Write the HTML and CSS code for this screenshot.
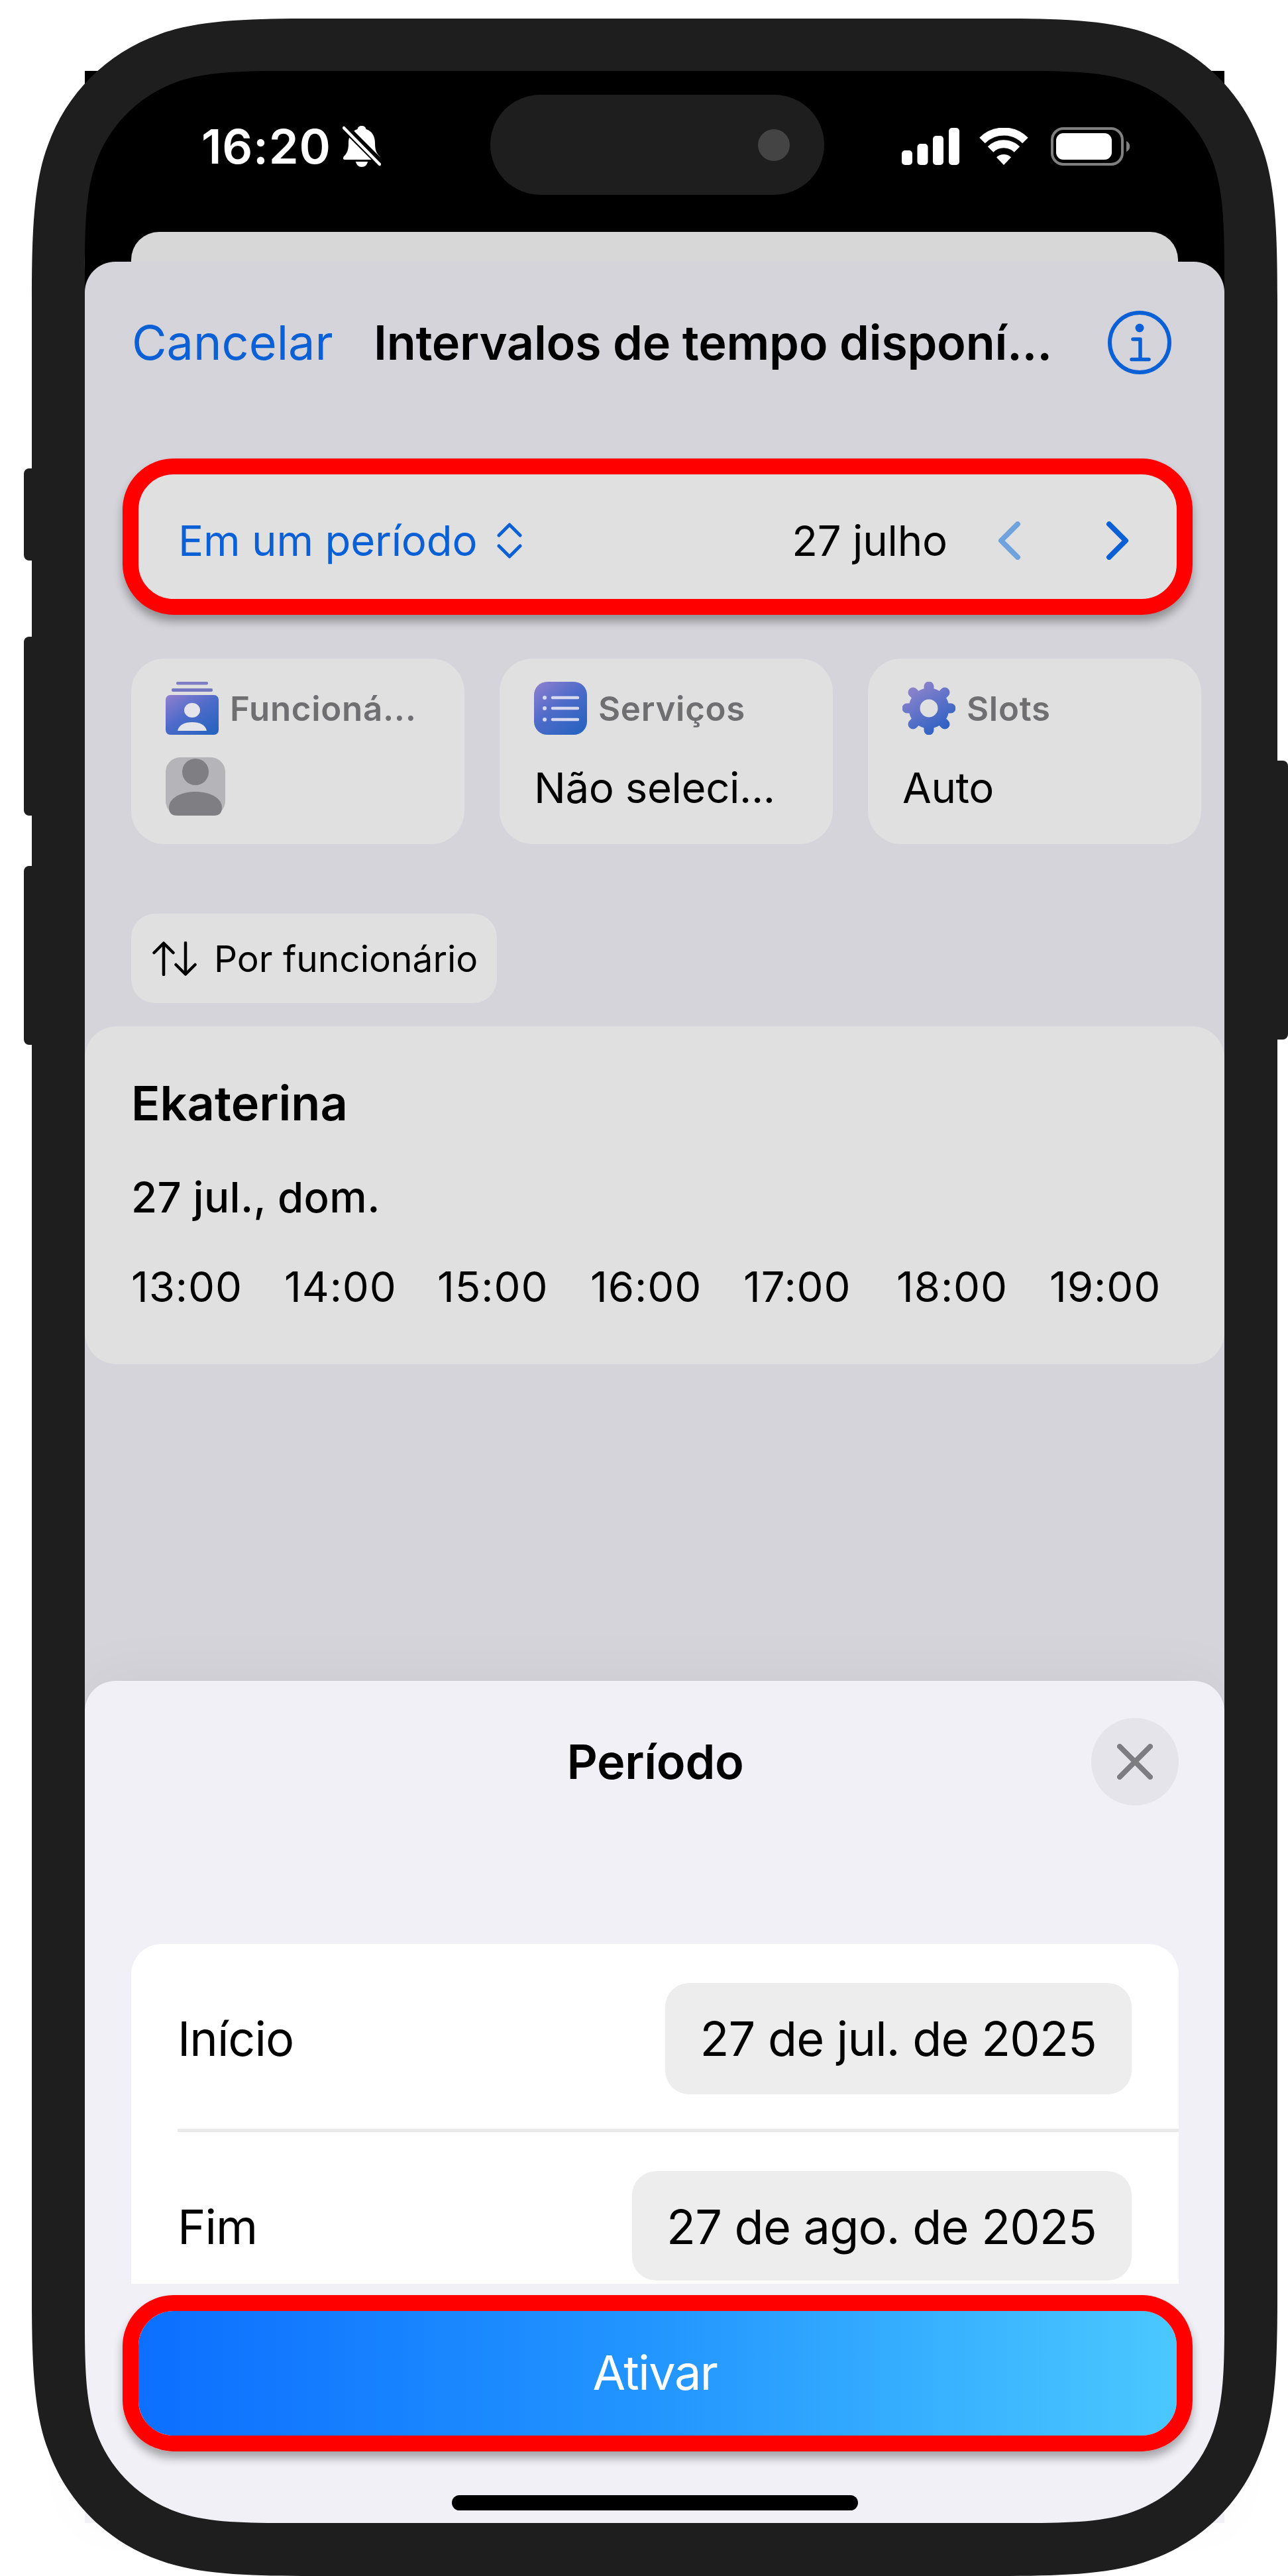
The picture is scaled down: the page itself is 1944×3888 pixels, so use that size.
FILE: index.html
```html
<!DOCTYPE html>
<html lang="pt">
<head>
    <meta charset="UTF-8">
    <meta name="viewport" content="width=device-width, initial-scale=1.0">
    <title>Intervalos de tempo disponíveis</title>
    <link rel="stylesheet" href="styles.css">
</head>
<body>
    <div class="phone">
        <div class="screen">
            <div class="status-bar">
                <div class="status-left">
                    <span class="clock">16:20</span>
                    <svg class="bell" viewBox="0 0 58 62">
                        <path d="M29 0c4 0 6 2 6.500 5C45 8 49 16 49 26c0 12 3 16 7 20 2 3 1 5-2 5H4c-3 0-4-2-2-5 4-4 7-8 7-20C9 16 13 8 22.500 5 23 2 25 0 29 0z" fill="#fff"/>
                        <path d="M20 54h18c-1 5-4 8-9 8s-8-3-9-8z" fill="#fff"/>
                        <path d="M2 1L60 59" stroke="#000" stroke-width="12"/>
                        <path d="M2 3L56 58" stroke="#fff" stroke-width="4.500" stroke-linecap="round"/>
                    </svg>
                </div>
                <div class="island"><span class="camera"></span></div>
                <div class="status-right">
                    <svg class="signal" viewBox="0 0 87 56" fill="#fff">
                        <rect x="0" y="34" width="16" height="22" rx="5"/>
                        <rect x="23.500" y="24" width="16" height="32" rx="5"/>
                        <rect x="47" y="12" width="16" height="44" rx="5"/>
                        <rect x="71" y="0" width="16" height="56" rx="5"/>
                    </svg>
                    <svg class="wifi" viewBox="0 0 74 56" fill="none" stroke="#fff" stroke-width="12">
                        <path d="M4.500 19a46 46 0 0 1 65 0"/>
                        <path d="M17 32.500a28.500 28.500 0 0 1 40 0"/>
                        <path d="M37 56L26 44.500a16 16 0 0 1 22 0z" fill="#fff" stroke="none"/>
                    </svg>
                    <svg class="battery" viewBox="0 0 120 58">
                        <rect x="2" y="2" width="106" height="54" rx="17" fill="none" stroke="#808080" stroke-width="4"/>
                        <rect x="8" y="9" width="84" height="40" rx="11" fill="#fff"/>
                        <path d="M114 21c7 3 7 13 0 16z" fill="#808080"/>
                    </svg>
                </div>
            </div>

            <div class="back-sheet"></div>
            <div class="sheet">
                <div class="nav">
                    <a class="cancel">Cancelar</a>
                    <h1 class="nav-title">Intervalos de tempo disponí...</h1>
                    <svg class="info" viewBox="0 0 96 96" fill="none" stroke="#0a60d4" stroke-width="6">
                        <circle cx="48" cy="48" r="45"/>
                        <circle cx="48" cy="26" r="6.500" fill="#0a60d4" stroke="none"/>
                        <path d="M38 43h11v30M36 73.500h26" stroke-width="5.500" stroke-linecap="round" stroke-linejoin="round"/>
                    </svg>
                </div>

                <div class="period highlight">
                    <span class="period-mode">Em um período</span>
                    <svg class="updown" viewBox="0 0 38 54" fill="none" stroke="#0a60d4" stroke-width="5" stroke-linecap="round" stroke-linejoin="round">
                        <path d="M3 19L19 3l16 16M3 35l16 16 16-16"/>
                    </svg>
                    <span class="period-date">27 julho</span>
                    <svg class="chevron prev" viewBox="0 0 36 58"><path d="M31 4L6 29l25 25"/></svg>
                    <svg class="chevron" viewBox="0 0 36 58"><path d="M5 4l25 25L5 54"/></svg>
                </div>

                <div class="filters">
                    <div class="filter">
                        <div class="filter-head">
                            <svg class="filter-icon" viewBox="0 0 80 80">
                                <defs>
                                    <linearGradient id="violet" x1="0" y1="0" x2="0.8" y2="1">
                                        <stop offset="0" stop-color="#9080cf"/>
                                        <stop offset="0.5" stop-color="#4f6bc9"/>
                                        <stop offset="1" stop-color="#2864c0"/>
                                    </linearGradient>
                                </defs>
                                <rect x="16" y="0" width="48" height="4.500" rx="2" fill="#7d7cc4"/>
                                <rect x="9" y="10" width="62" height="5" rx="2" fill="#7478c0"/>
                                <rect x="0" y="20" width="80" height="60" rx="7" fill="url(#violet)"/>
                                <ellipse cx="40" cy="43" rx="12" ry="11" fill="#e4e4ea"/>
                                <path d="M18 74c2-9 10-13 22-13s20 4 22 13z" fill="#e4e4ea"/>
                            </svg>
                            <span class="filter-label">Funcioná...</span>
                        </div>
                        <div class="filter-value">
                            <svg class="avatar" viewBox="0 0 90 90">
                                <rect width="90" height="88" rx="22" fill="#b5b5b9"/>
                                <circle cx="45" cy="22" r="20" fill="#7f7f83"/>
                                <path d="M5 76c0-14 17-24 40-24s40 10 40 24c0 8-4 12-12 12H17C9 88 5 84 5 76z" fill="#7f7f83"/>
                            </svg>
                        </div>
                    </div>
                    <div class="filter">
                        <div class="filter-head">
                            <svg class="filter-icon" viewBox="0 0 80 80">
                                <rect width="80" height="80" rx="20" fill="url(#violet)"/>
                                <path d="M28 24h38M28 40h38M28 57h38" stroke="#d5d8ee" stroke-width="4.500" stroke-linecap="round"/>
                                <path d="M16 24h.1M16 40h.1M16 57h.1" stroke="#d5d8ee" stroke-width="6" stroke-linecap="round"/>
                            </svg>
                            <span class="filter-label">Serviços</span>
                        </div>
                        <div class="filter-value">Não seleci...</div>
                    </div>
                    <div class="filter">
                        <div class="filter-head">
                            <svg class="filter-icon" viewBox="0 0 80 80">
                                <defs>
                                    <linearGradient id="gear" gradientUnits="userSpaceOnUse" x1="15" y1="10" x2="55" y2="75">
                                        <stop offset="0" stop-color="#8b82cc"/>
                                        <stop offset="1" stop-color="#2f62c4"/>
                                    </linearGradient>
                                </defs>
                                <g stroke="url(#gear)">
                                    <circle cx="40" cy="40" r="22" fill="none" stroke-width="17"/>
                                    <path d="M40.010 7L40 17M40.010 63L40 73M7 40.010L17 40M63 40.010L73 40M16 16L24 24M56 56L64 64M16 64L24 56M56 24L64 16" stroke-width="15" stroke-linecap="round"/>
                                </g>
                            </svg>
                            <span class="filter-label">Slots</span>
                        </div>
                        <div class="filter-value">Auto</div>
                    </div>
                </div>

                <div class="sort">
                    <svg class="sort-icon" viewBox="0 0 68 52" fill="none" stroke="#000" stroke-width="4.500" stroke-linecap="round" stroke-linejoin="round">
                        <path d="M17 50V3M2.500 17L17 2.500 31.500 17M50 2v47M35.500 35L50 49.500 64.500 35"/>
                    </svg>
                    <span class="sort-label">Por funcionário</span>
                </div>

                <div class="employee">
                    <h2 class="employee-name">Ekaterina</h2>
                    <div class="employee-date">27 jul., dom.</div>
                    <div class="slots">
                        <span class="slot">13:00</span>
                        <span class="slot">14:00</span>
                        <span class="slot">15:00</span>
                        <span class="slot">16:00</span>
                        <span class="slot">17:00</span>
                        <span class="slot">18:00</span>
                        <span class="slot">19:00</span>
                    </div>
                </div>

                <div class="modal">
                    <div class="modal-head">
                        <h2 class="modal-title">Período</h2>
                        <div class="close">
                            <svg viewBox="0 0 54 54" stroke="#7c7c81" stroke-width="8" stroke-linecap="round"><path d="M4 4l46 46M50 4L4 50"/></svg>
                        </div>
                    </div>
                    <div class="dates">
                        <div class="date-row">
                            <span class="date-label">Início</span>
                            <span class="date-value">27 de jul. de 2025</span>
                        </div>
                        <div class="date-row">
                            <span class="date-label">Fim</span>
                            <span class="date-value">27 de ago. de 2025</span>
                        </div>
                    </div>
                    <div class="activate highlight">Ativar</div>
                    <div class="home-indicator"></div>
                </div>
            </div>
        </div>

        <!-- phone body -->
        <svg class="frame" viewBox="0 0 1944 3888" fill="#1e1e1e">
            <rect x="36" y="707" width="40" height="139" rx="8"/>
            <rect x="36" y="961" width="40" height="270" rx="8"/>
            <rect x="36" y="1307" width="40" height="270" rx="8"/>
            <rect x="1900" y="1148" width="44" height="421" rx="8"/>
            <path fill-rule="evenodd" d="M48 452C48 358 50 278 72 220C100 141 161 80 240 52C298 30 378 28 472 28H1504C1598 28 1678 30 1736 52C1815 80 1876 141 1904 220C1926 278 1928 358 1928 452V3464C1928 3558 1926 3638 1904 3696C1876 3775 1815 3836 1736 3864C1678 3886 1598 3888 1504 3888H472C378 3888 298 3886 240 3864C161 3836 100 3775 72 3696C50 3638 48 3558 48 3464Z
                M128 407V3508C128 3578 130 3628 145 3670C165 3726 210 3771 266 3791C308 3806 358 3808 428 3808H1548C1618 3808 1668 3806 1710 3791C1766 3771 1811 3726 1831 3670C1846 3628 1848 3578 1848 3508V407C1848 337 1846 287 1831 245C1811 189 1766 144 1710 124C1668 109 1618 107 1548 107H428C358 107 308 109 266 124C210 144 165 189 145 245C130 287 128 337 128 407Z"/>
        </svg>
    </div>
</body>
</html>
```

FILE: styles.css
```css
body {
    margin: 0;
    background-color: #fff;
    font-family: Inter, "Liberation Sans", sans-serif;
    color: #000;
}

h1, h2 {
    margin: 0;
    font-size: 72px;
    font-weight: 600;
    line-height: 90px;
}

svg {
    display: block;
    flex: none;
}

.phone {
    position: relative;
    width: 1944px;
    height: 3888px;
    box-sizing: border-box;
    padding: 107px 96px 80px 128px;
    overflow: hidden;
}

/* the phone body lies over the corners of the screen */
.frame {
    position: absolute;
    left: 0;
    top: 0;
    width: 1944px;
    height: 3888px;
}

.screen {
    display: flex;
    flex-direction: column;
    height: 3701px;
    background-color: #000;
}

/* Status bar */
.status-bar {
    display: grid;
    grid-template-columns: 612px 504px 604px;
    align-items: center;
    height: 223px;
    margin-bottom: 20px;
}

.status-left,
.status-right {
    display: flex;
    align-items: center;
    padding-top: 4px;
}

.status-left {
    padding-left: 176px;
}

.clock {
    width: 213px;
    color: #fff;
    font-size: 72px;
    font-weight: 600;
    letter-spacing: 0.8px;
    line-height: 90px;
}

.bell {
    width: 58px;
    height: 62px;
}

.island {
    display: flex;
    align-items: center;
    justify-content: flex-end;
    height: 151px;
    box-sizing: border-box;
    padding-right: 52px;
    border-radius: 76px;
    background-color: #1e1e1e;
}

.camera {
    width: 48px;
    height: 48px;
    border-radius: 50%;
    background-color: #444;
}

.status-right {
    padding-left: 117px;
}

.signal {
    width: 87px;
    height: 56px;
}

.wifi {
    width: 74px;
    height: 56px;
    margin-left: 30px;
}

.battery {
    width: 120px;
    height: 58px;
    margin-left: 34px;
}

/* Main sheet */
.back-sheet {
    height: 45px;
    margin: 0 70px;
    border-radius: 42px 42px 0 0;
    background-color: #d7d7d7;
}

.sheet {
    display: flex;
    flex: 1;
    flex-direction: column;
    border-radius: 46px 46px 0 0;
    background-color: #d5d4da;
}

.nav {
    display: flex;
    align-items: center;
    height: 243px;
    padding: 0 80px 0 71px;
}

.cancel {
    width: 365px;
    color: #0a60d4;
    font-size: 72px;
    line-height: 90px;
}

.nav-title {
    letter-spacing: -0.3px;
    white-space: nowrap;
}

.info {
    width: 96px;
    height: 96px;
    margin-left: auto;
}

.highlight {
    height: 236px;
    margin-left: 57px;
    margin-right: 48px;
    box-sizing: border-box;
    border: 24px solid #f00;
    border-radius: 77px;
    box-shadow: 0 10px 14px rgba(0, 0, 0, 0.32);
}

.period {
    display: flex;
    align-items: center;
    margin-top: 54px;
    padding: 12px 71px 0 60px;
    background-color: #e0e0e0;
    font-size: 63.5px;
    letter-spacing: -0.2px;
    line-height: 80px;
}

.period-mode {
    color: #0a60d4;
}

.updown {
    width: 38px;
    height: 54px;
    margin-left: 30px;
}

.period-date {
    margin-left: auto;
}

.chevron {
    width: 36px;
    height: 58px;
    margin-left: 128px;
    fill: none;
    stroke: #0a60d4;
    stroke-width: 8;
    stroke-linecap: round;
    stroke-linejoin: round;
}

.chevron.prev {
    margin-left: 75px;
    stroke: #6fa3de;
}

.filters {
    display: grid;
    grid-template-columns: 503px 503px 503px;
    gap: 53px;
    margin: 66px 0 0 70px;
}

.filter {
    height: 280px;
    box-sizing: border-box;
    padding: 35px 0 0 52px;
    border-radius: 50px;
    background-color: #e0e0e0;
}

.filter-head {
    display: flex;
    align-items: center;
    height: 80px;
}

.filter-icon {
    width: 80px;
    height: 80px;
}

.filter-label {
    margin-left: 17px;
    color: #6f6f72;
    font-size: 51px;
    font-weight: 600;
    letter-spacing: 0.7px;
}

.filter-value {
    height: 90px;
    margin-top: 34px;
    font-size: 63.5px;
    letter-spacing: -0.4px;
    line-height: 92px;
}

.avatar {
    width: 90px;
    height: 90px;
}

.sort {
    display: flex;
    align-items: center;
    align-self: flex-start;
    width: 552px;
    height: 135px;
    box-sizing: border-box;
    margin: 105px 0 0 70px;
    padding-left: 32px;
    border-radius: 36px;
    background-color: #e0e0e0;
    font-size: 55px;
}

.sort-icon {
    width: 68px;
    height: 52px;
}

.sort-label {
    margin-left: 25px;
}

.employee {
    height: 510px;
    box-sizing: border-box;
    margin-top: 35px;
    padding: 71px 70px 0;
    border-radius: 48px;
    background-color: #e0e0e0;
}

.employee-date {
    margin-top: 57px;
    font-size: 63.5px;
    font-weight: 500;
    letter-spacing: 0.4px;
    line-height: 80px;
}

.slots {
    display: grid;
    grid-template-columns: repeat(7, 231px);
    margin-top: 55px;
    font-size: 63.5px;
    letter-spacing: 0.9px;
    line-height: 80px;
}

/* Period modal */
.modal {
    height: 1271px;
    box-sizing: border-box;
    margin-top: auto;
    padding-top: 56px;
    border-radius: 46px 46px 0 0;
    background-color: #f1f0f7;
    box-shadow: 0 -10px 90px rgba(0, 0, 0, 0.04);
    font-size: 72px;
}

.modal-head {
    display: flex;
    align-items: center;
    justify-content: flex-end;
    height: 132px;
    padding-right: 69px;
}

.modal-title {
    flex: 1;
    padding-left: 203px;
    letter-spacing: -0.3px;
    text-align: center;
}

.close {
    display: flex;
    align-items: center;
    justify-content: center;
    width: 132px;
    height: 132px;
    border-radius: 50%;
    background-color: #e5e4ea;
}

.close svg {
    width: 54px;
    height: 54px;
}

.dates {
    height: 513px;
    margin: 209px 69px 0 70px;
    border-radius: 46px 46px 0 0;
    background-color: #fff;
    letter-spacing: -0.8px;
}

.date-row {
    display: flex;
    justify-content: space-between;
    height: 279px;
    box-sizing: border-box;
    margin-left: 70px;
    padding: 59px 71px 0 0;
    line-height: 168px;
}

.date-row + .date-row {
    height: 234px;
    border-top: 5px solid #e9e9e9;
}

.date-label {
    letter-spacing: -1px;
}

.date-value {
    height: 168px;
    padding: 0 53px 0 52px;
    border-radius: 36px;
    background-color: #ededed;
}

.date-row + .date-row .date-value {
    height: 165px;
}

.activate {
    margin-top: 17px;
    padding-right: 8px;
    background: linear-gradient(90deg, #0c6fff, #2396ff 50%, #4ac8ff) padding-box;
    color: #fff;
    letter-spacing: -1.5px;
    line-height: 186px;
    text-align: center;
}

.home-indicator {
    width: 613px;
    height: 23px;
    margin: 66px auto 0;
    border-radius: 12px;
    background-color: #000;
}
```
